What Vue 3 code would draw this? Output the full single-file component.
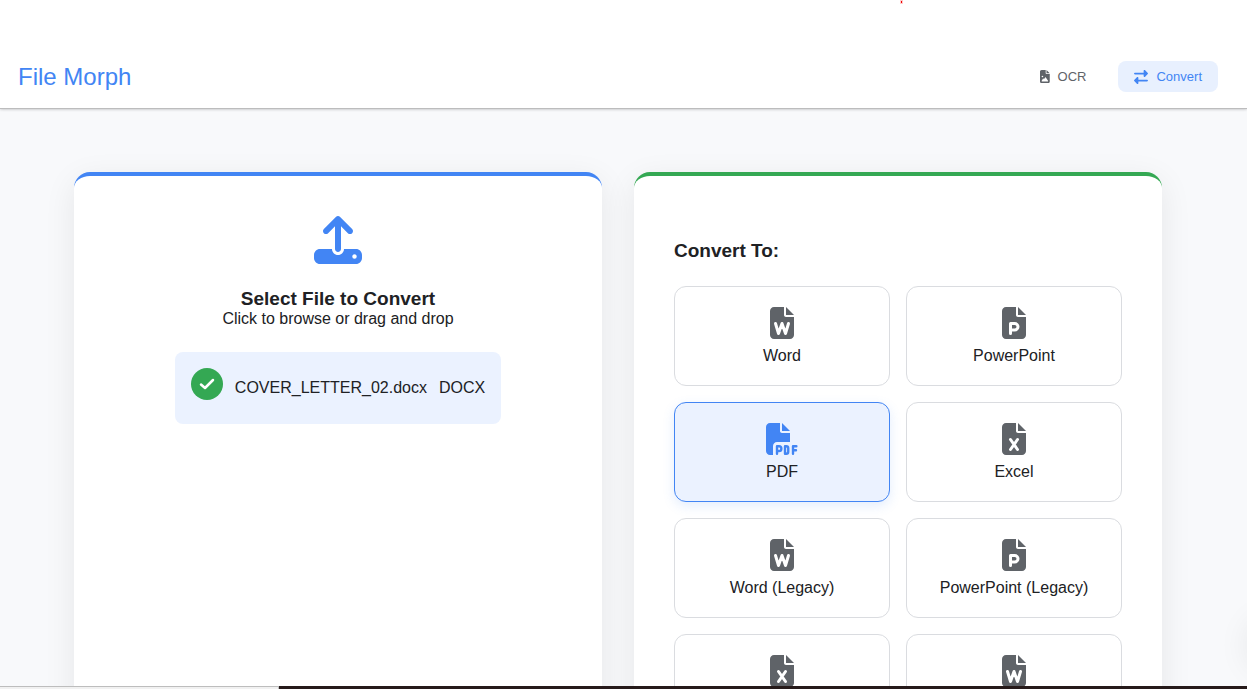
<script setup>
import { ref } from 'vue'

const selected = ref('PDF')
const formats = [
  { name: 'Word', mark: 'w' },
  { name: 'PowerPoint', mark: 'p' },
  { name: 'PDF', mark: 'pdf' },
  { name: 'Excel', mark: 'x' },
  { name: 'Word (Legacy)', mark: 'w' },
  { name: 'PowerPoint (Legacy)', mark: 'p' },
  { name: 'Excel (Legacy)', mark: 'x' },
  { name: 'OpenDocument', mark: 'w' },
]
const marks = {
  w: 'M88 264l48 160 56-160 56 160 48-160',
  p: 'M136 424V264h68a52 52 0 0 1 0 104h-68',
  x: 'M136 264l112 160M248 264L136 424',
}
</script>

<template>
  <div class="page">
    <header class="header">
      <a class="brand" href="#">File Morph</a>
      <nav class="nav">
        <a class="link" href="#ocr">
          <svg class="icon-file" viewBox="0 0 384 512" aria-hidden="true">
            <path fill-rule="evenodd" d="M64 0C28.700 0 0 28.700 0 64v384c0 35.300 28.700 64 64 64h256c35.300 0 64-28.700 64-64V160H256c-17.700 0-32-14.300-32-32V0H64zM256 0v128h128L256 0zM64 256a32 32 0 1 1 64 0 32 32 0 1 1-64 0zm152 32c5.300 0 10.200 2.600 13.200 6.900l88 128c3.400 4.900 3.700 11.300 1 16.500s-8.200 8.600-14.200 8.600H80c-5.800 0-11.100-3.100-13.900-8.100s-2.800-11.200.2-16.100l48-80c2.900-4.800 8.100-7.800 13.700-7.800s10.800 2.900 13.700 7.800l12.800 21.400 48.300-70.200c3-4.300 7.900-6.900 13.200-6.900z" />
          </svg>
          OCR
        </a>
        <a class="link active" href="#convert" aria-current="page">
          <svg class="icon-swap" viewBox="0 0 512 512" aria-hidden="true">
            <path d="M32 96h320V32c0-12.900 7.800-24.600 19.800-29.600s25.700-2.200 34.900 6.900l96 96c6 6 9.400 14.100 9.400 22.600s-3.400 16.600-9.400 22.600l-96 96c-9.200 9.200-22.900 11.900-34.900 6.900s-19.800-16.600-19.800-29.600V160H32c-17.700 0-32-14.300-32-32s14.300-32 32-32zM480 352c17.700 0 32 14.300 32 32s-14.300 32-32 32H160v64c0 12.900-7.800 24.600-19.800 29.600s-25.700 2.200-34.900-6.900l-96-96c-6-6-9.400-14.100-9.400-22.600s3.400-16.600 9.400-22.600l96-96c9.200-9.200 22.900-11.900 34.900-6.900s19.800 16.600 19.800 29.600v64h320z" />
          </svg>
          Convert
        </a>
      </nav>
    </header>

    <main class="main">
      <section class="card upload">
        <label class="drop">
          <input class="file-input" type="file" />
          <svg class="icon-upload" viewBox="0 0 512 512" aria-hidden="true">
            <path fill-rule="evenodd" d="M288 109.300V352c0 17.700-14.300 32-32 32s-32-14.300-32-32V109.300l-73.400 73.400c-12.500 12.500-32.800 12.500-45.300 0s-12.500-32.800 0-45.300l128-128c12.500-12.500 32.800-12.500 45.300 0l128 128c12.500 12.500 12.500 32.800 0 45.300s-32.800 12.500-45.300 0L288 109.300zM64 352h128c0 35.300 28.700 64 64 64s64-28.700 64-64h128c35.300 0 64 28.700 64 64v32c0 35.300-28.700 64-64 64H64c-35.300 0-64-28.700-64-64v-32c0-35.300 28.700-64 64-64zM432 456a24 24 0 1 0 0-48 24 24 0 1 0 0 48z" />
          </svg>
          <span class="title">Select File to Convert</span>
          <span>Click to browse or drag and drop</span>
        </label>
        <div class="file">
          <svg class="icon-check" viewBox="0 0 32 32" aria-hidden="true">
            <circle cx="16" cy="16" r="16" />
            <path d="M10 16.500l4 3.500L22 12" />
          </svg>
          <span class="file-text">COVER_LETTER_02.docx</span>
          <span class="file-text">DOCX</span>
        </div>
      </section>

      <section class="card convert">
        <h2 class="title">Convert To:</h2>
        <div class="grid">
          <button
            v-for="f in formats"
            :key="f.name"
            type="button"
            class="tile"
            :class="{ chosen: selected === f.name }"
            :aria-pressed="selected === f.name"
            @click="selected = f.name"
          >
            <svg v-if="f.mark === 'pdf'" class="icon-format" viewBox="0 0 512 512" aria-hidden="true">
              <path d="M0 64C0 28.700 28.700 0 64 0h160v128c0 17.700 14.300 32 32 32h128v144H176c-35.300 0-64 28.700-64 64v144H64c-35.300 0-64-28.700-64-64V64zm384 64H256V0l128 128z" />
              <path class="stroke" d="M176 492V372h32a38 38 0 0 1 0 76h-32M304 372h20a32 32 0 0 1 32 32v56a32 32 0 0 1-32 32h-20zM432 492V372h54M432 436h48" />
            </svg>
            <svg v-else class="icon-format" viewBox="0 0 384 512" aria-hidden="true">
              <path d="M64 0C28.700 0 0 28.700 0 64v384c0 35.300 28.700 64 64 64h256c35.300 0 64-28.700 64-64V160H256c-17.700 0-32-14.300-32-32V0H64zM256 0v128h128L256 0z" />
              <path class="mark" :d="marks[f.mark]" />
            </svg>
            <span>{{ f.name }}</span>
          </button>
        </div>
      </section>
    </main>

    <div class="red-dot"></div>
    <div class="side-glow"></div>
    <div class="bottom-edge"><div class="edge-light"></div><div class="edge-dark"></div></div>
  </div>
</template>

<style>
body {
  margin: 0;
}
</style>

<style scoped>
.page {
  position: relative;
  box-sizing: border-box;
  height: 100vh;
  overflow: hidden;
  background: #f8f9fb;
  color: #202124;
  font: 16px/18px "Liberation Sans", Arial, sans-serif;
}
.header {
  display: flex;
  align-items: center;
  justify-content: space-between;
  box-sizing: border-box;
  height: 108px;
  padding: 45px 29px 0 18px;
  background: #fff;
  box-shadow: 0 1px 0 #bcbcbd, 0 1px 3px rgba(0, 0, 0, 0.3);
}
.brand {
  color: #4285f4;
  font-size: 24px;
  line-height: 28px;
  text-decoration: none;
}
.nav {
  display: flex;
  gap: 16px;
}
.link {
  display: flex;
  align-items: center;
  gap: 8px;
  padding: 0 16px;
  height: 31px;
  border-radius: 8px;
  color: #5f6368;
  font-size: 13px;
  text-decoration: none;
}
.active {
  background: #e8f0fe;
  color: #4285f4;
}
svg {
  display: block;
  fill: currentColor;
}
.icon-file {
  height: 13px;
}
.icon-swap {
  height: 14px;
}
.main {
  display: grid;
  grid-template-columns: 1fr 1fr;
  gap: 32px;
  max-width: 1088px;
  margin: 64px auto 0;
  padding: 0 43px 0 32px;
}
.card {
  box-sizing: border-box;
  padding: 40px;
  border-top: 4px solid #4285f4;
  border-radius: 16px;
  background: #fff;
  box-shadow: 0 8px 32px rgba(0, 0, 0, 0.08);
}
.upload {
  display: flex;
  flex-direction: column;
  align-items: center;
  gap: 24px;
}
.drop {
  display: flex;
  flex-direction: column;
  align-items: center;
  cursor: pointer;
}
.file-input {
  position: absolute;
  width: 1px;
  height: 1px;
  opacity: 0;
}
.icon-upload {
  height: 48px;
  margin-bottom: 24px;
  color: #4285f4;
}
.title {
  margin: 0;
  font-size: 19px;
  line-height: 22px;
  font-weight: 700;
}
.file {
  display: flex;
  gap: 12px;
  box-sizing: border-box;
  height: 72px;
  padding: 16px;
  border-radius: 8px;
  background: #ebf2ff;
}
.icon-check {
  height: 32px;
}
.icon-check circle {
  fill: #34a853;
}
.icon-check path {
  fill: none;
  stroke: #fff;
  stroke-width: 2.500;
  stroke-linecap: round;
  stroke-linejoin: round;
}
.file-text {
  line-height: 40px;
}
.convert {
  border-top-color: #34a853;
  padding-top: 64px;
}
.grid {
  display: grid;
  grid-template-columns: 1fr 1fr;
  gap: 16px;
  margin-top: 24px;
}
.tile {
  display: flex;
  flex-direction: column;
  align-items: center;
  gap: 8px;
  padding: 20px 8px;
  border: 1px solid #dadce0;
  border-radius: 12px;
  background: #fff;
  color: #202124;
  font: inherit;
  cursor: pointer;
}
.chosen {
  border-color: #4285f4;
  background: #ebf2ff;
  box-shadow: 0 4px 12px rgba(66, 133, 244, 0.15);
}
.icon-format {
  height: 32px;
  color: #5f6368;
}
.chosen .icon-format {
  color: #4285f4;
}
.mark {
  fill: none;
  stroke: #fff;
  stroke-width: 48;
  stroke-linecap: round;
  stroke-linejoin: round;
}
.stroke {
  fill: none;
  stroke: currentColor;
  stroke-width: 38;
  stroke-linecap: round;
  stroke-linejoin: round;
}
.red-dot {
  position: absolute;
  top: 1px;
  left: 901px;
  width: 1px;
  height: 2px;
  background: #e00;
  outline: 1px solid #fcc;
}
.side-glow {
  position: absolute;
  right: -56px;
  bottom: 16px;
  width: 56px;
  height: 56px;
  border-radius: 50%;
  box-shadow: 0 0 32px rgba(0, 0, 0, 0.08);
}
.bottom-edge {
  position: absolute;
  left: 0;
  right: 0;
  bottom: 0;
  display: flex;
  height: 3px;
}
.edge-light {
  box-sizing: border-box;
  width: 279px;
  border-top: 1px solid #bdbdbd;
  border-right: 1px solid #bdbdbd;
  background: #f1f1f1;
}
.edge-dark {
  flex: 1;
  background: #261a1a;
}
</style>
